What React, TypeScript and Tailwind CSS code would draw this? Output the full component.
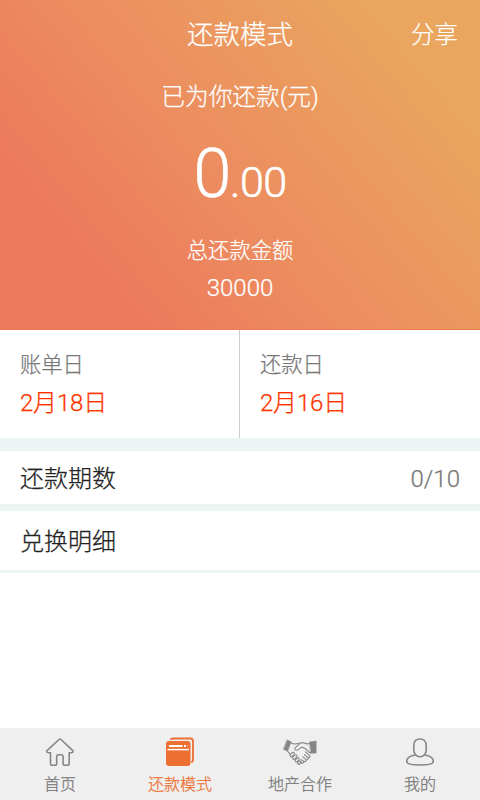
import type { ReactNode } from "react";

function HomeIcon() {
  return (
    <svg width="28" height="28" viewBox="0 0 28 28" fill="none" stroke="#868686" strokeWidth="1.6" strokeLinejoin="round" strokeLinecap="round">
      <path d="M13 1.500 1.300 12.400c-1.200 1.200-.4 2.300 1 2.300h2.200v10.800c0 1.200.5 1.800 1.600 1.800h3c1.200 0 1.600-.6 1.600-1.800v-6.700c0-1.400.7-2 1.800-2h2.800c1.200 0 1.800.6 1.800 2v6.700c0 1.200.5 1.800 1.600 1.800h2.800c1.200 0 1.700-.6 1.700-1.800V14.700h2.300c1.500 0 2.200-1.100 1-2.300L15 1.500c-.7-.7-1.300-.7-2 0Z" />
    </svg>
  );
}

function CardsIcon() {
  return (
    <svg width="30" height="30" viewBox="0 0 30 30" fill="none">
      <path d="M5.500 2.800C6 1.800 6.700 1.500 8 1.500h17.500c1.800 0 2.500 1 2.500 2.700v18.500c0 1.400-.6 2.300-1.800 2.500" stroke="#ed6f31" strokeWidth="1.800" />
      <rect x="1" y="4" width="24.500" height="25" rx="3" fill="#ed6f31" />
      <path d="M4 9h13.500M19 9h2" stroke="#fff" strokeWidth="1.900" />
      <path d="M22 9h1" stroke="#fff" strokeOpacity=".4" strokeWidth="1.500" />
      <path d="M2.500 12.600h21.500" stroke="#fff" strokeWidth="1.500" />
    </svg>
  );
}

function HandshakeIcon() {
  return (
    <svg width="34" height="28" viewBox="0 0 34 28" fill="none" stroke="#868686" strokeWidth="1.100" strokeLinejoin="round" strokeLinecap="round">
      <path d="M4.300 2 8.200 3.800 4.500 13.200 .7 11.500Z" fill="#868686" strokeWidth=".6" />
      <path d="m26.800 4 6.300-1v12l-5.300.2Z" fill="#868686" strokeWidth=".6" />
      <path d="M8.300 5c2.300 1.300 4.700 1.200 7.300.2M4.700 13.300l2.600 3.200" />
      <path d="M26.800 5.500c-1.900.7-3.900.3-5.700-.5-2-.9-3.300-.5-4.800.8l-4.100 4c-.9 1.300.1 2.500 1.700 2.400 1.900-.2 3.200-2.100 4.500-3.100 2.100.9 4.500.6 6.600 4.100l1.700 1.600 1.300-.3" />
      <path d="m22.500 13.800 3.900 3.500c1.300 1.300-.2 3.100-1.800 2L21.500 16.700M24.900 19.300c1 1.400-.5 3.100-2 2.100l-3-2.500M22.900 21.400c.8 1.500-.8 2.800-2.300 1.900l-2.400-1.700M20.600 23.300c.2 1.600-1.200 2.500-2.600 1.500l-.7-.4" />
      <path d="m7.300 16.500 1.900-1.800c1.500-1.100 2.900.5 1.800 1.900l-1.700 1.900c-1.400 1-2.900-.6-2-2Z" />
      <path d="m9.700 19.100 2.200-2c1.500-.9 2.800.6 1.700 2l-1.700 2c-1.500.9-2.900-.6-2.200-2Z" />
      <path d="m12.300 21.800 1.900-1.800c1.400-.8 2.700.6 1.700 1.900l-1.500 1.700c-1.400.8-2.800-.5-2.100-1.800Z" />
      <path d="m14.800 24.500 1.400-1.400c1.300-.6 2.400.6 1.500 1.700l-1.200 1.400c-1.200.6-2.300-.6-1.700-1.700Z" />
    </svg>
  );
}

function UserIcon() {
  return (
    <svg width="30" height="28" viewBox="0 0 30 28" fill="none" stroke="#868686" strokeWidth="1.600">
      <path d="M15 1c-3.900 0-6.200 2.500-6.200 6.500v4.200c0 4.100 2.600 7.100 6.200 7.100s6.200-3 6.200-7.100V7.500C21.200 3.500 18.900 1 15 1Z" />
      <path d="M10.300 17C5.200 17.700 1.700 20.300 1.700 23.500c0 2.200 4 3.500 13.300 3.500s13.300-1.300 13.300-3.500c0-3.200-3.500-5.800-8.600-6.500" />
    </svg>
  );
}

function Tab({ icon, label, active = false }: { icon: ReactNode; label: string; active?: boolean }) {
  return (
    <button className={`flex w-[120px] flex-col items-center pt-[9px] ${active ? "text-[#ed6f31]" : "text-[#777]"}`}>
      <span className="flex h-[30px] items-center justify-center">{icon}</span>
      <span className="mt-[6px] text-base leading-6">{label}</span>
    </button>
  );
}

function DateCell({ label, date }: { label: string; date: string }) {
  return (
    <div className="flex flex-1 flex-col pl-5 pt-[19px]">
      <span className="text-[21.300px] leading-8 text-[#777]">{label}</span>
      <span className="mt-[6px] text-2xl leading-8 tracking-[-0.2px] text-[#ff3500]">{date}</span>
    </div>
  );
}

export default function App() {
  return (
    <div className="flex h-[800px] w-[480px] flex-col overflow-hidden bg-white font-['Roboto','Noto_Sans_CJK_SC',sans-serif] font-light [-webkit-text-stroke:0.25px_currentColor]">
      <header className="flex h-[330px] flex-col items-center border-b border-[#ed7b50] bg-[linear-gradient(50deg,#ed7a5d_20%,#ec8d5f_46%,#eb985f_64%,#eaa65f_86%)] text-white">
        <div className="grid h-[70px] w-full grid-cols-[1fr_auto_1fr] items-center">
          <h1 className="col-start-2 text-[26.500px] leading-9">还款模式</h1>
          <span className="justify-self-end pr-[22px] text-[23.500px] leading-9">分享</span>
        </div>
        <p className="mt-[9px] text-[23.700px] leading-9">已为你还款(元)</p>
        <p className="mt-[19px] flex h-20 items-baseline leading-[80px] [-webkit-text-stroke:0.6px_currentColor]">
          <span className="text-[68px] tracking-[-1px]">0</span>
          <span className="text-[43px] tracking-[-0.5px]">.00</span>
        </p>
        <p className="mt-[21px] text-[21.300px] leading-8">总还款金额</p>
        <p className="mt-[5px] text-2xl leading-8">30000</p>
      </header>
      <section className="flex h-[108px]">
        <DateCell label="账单日" date="2月18日" />
        <div className="-ml-px w-px bg-[#ccc]" />
        <DateCell label="还款日" date="2月16日" />
      </section>
      <div className="h-[13px] bg-[#ecf5f4]" />
      <div className="flex h-[53px] items-center justify-between px-5 pt-[2px] text-2xl">
        <span className="text-[#222]">还款期数</span>
        <span className="text-[#777]">0/10</span>
      </div>
      <div className="h-[7px] bg-[#ecf5f4]" />
      <div className="flex h-[59px] items-center px-5 pt-[2px] text-2xl text-[#222]">兑换明细</div>
      <div className="h-[3px] bg-[#ecf5f4]" />
      <main className="flex-1" />
      <nav className="flex h-[72px] bg-[#efefef]">
        <Tab icon={<HomeIcon />} label="首页" />
        <Tab icon={<CardsIcon />} label="还款模式" active />
        <Tab icon={<HandshakeIcon />} label="地产合作" />
        <Tab icon={<UserIcon />} label="我的" />
      </nav>
    </div>
  );
}
